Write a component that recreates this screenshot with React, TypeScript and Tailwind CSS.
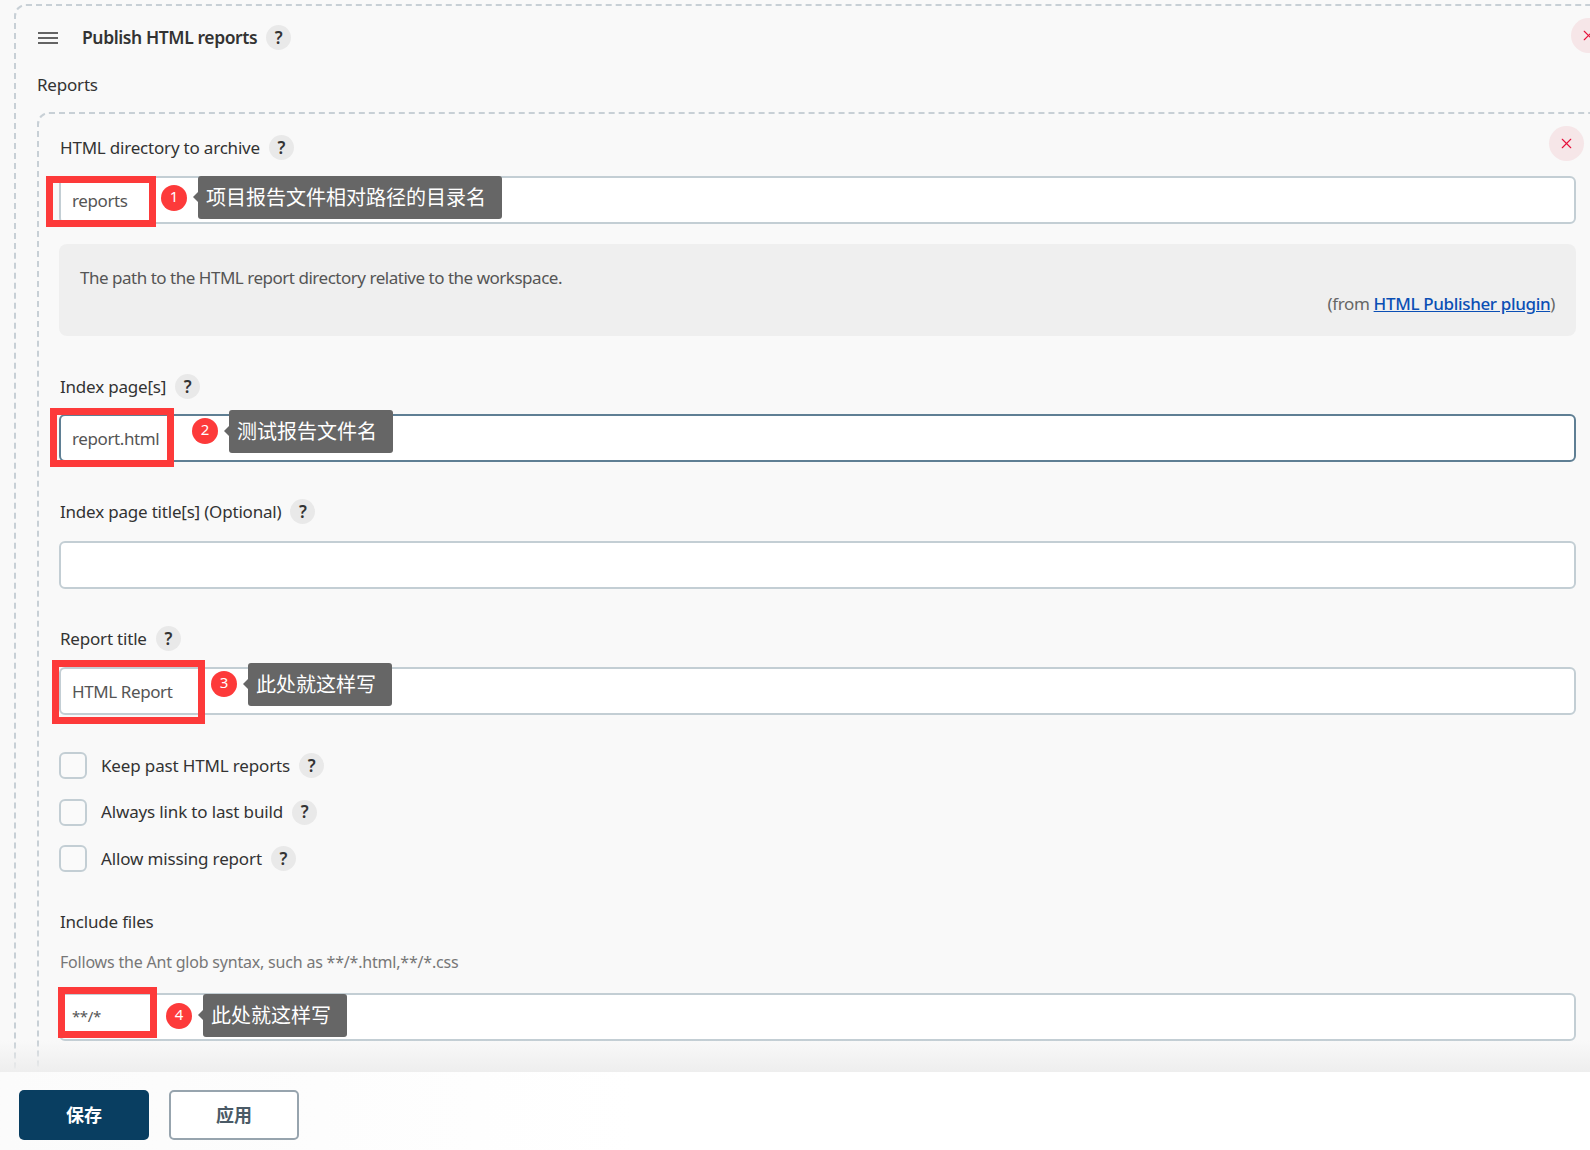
import { X } from "lucide-react";

const font = "font-['Noto_Sans','Noto_Sans_CJK_SC',sans-serif]";

const HelpDot = () => (
  <span className="ml-[9px] flex h-[25px] w-[25px] shrink-0 items-center justify-center rounded-full bg-[#e9e9e9] text-[17px] font-semibold text-[#333]">
    ?
  </span>
);

const Label = ({ text }: { text: string }) => (
  <div className="ml-[1px] flex h-[25px] items-center text-[17px] tracking-[-0.2px] text-[#333]">
    {text}
    <HelpDot />
  </div>
);

const TextBox = ({ value, focused, small }: { value?: string; focused?: boolean; small?: boolean }) => (
  <input
    readOnly
    value={value ?? ""}
    className={`block h-[48px] w-[1517px] rounded-[6px] border-2 bg-white px-[11px] tracking-[-0.4px] text-[#555] outline-none ${
      small ? "pb-[2px] text-[15px]" : "text-[17px]"
    } ${focused ? "border-[#5f7f94]" : "border-[#c3ced4]"}`}
  />
);

const Check = ({ text }: { text: string }) => (
  <div className="flex h-[27px] items-center text-[17px] tracking-[-0.15px] text-[#333]">
    <span className="mr-[14px] h-[27px] w-[28px] rounded-[6px] border-2 border-[#c3ced4] bg-[#fafafa]" />
    {text}
    <HelpDot />
  </div>
);

// red marks the author drew over the screenshot
const Note = ({
  n,
  text,
  box,
  badge,
  tip,
}: {
  n: number;
  text: string;
  box: string;
  badge: string;
  tip: string;
}) => (
  <>
    <div className={`absolute border-[7px] border-[#fd3a3a] ${box}`} />
    <div
      className={`absolute flex h-[26px] w-[26px] items-center justify-center rounded-full bg-[#fd3a3a] pb-[3px] text-[15px] text-white ${badge}`}
    >
      {n}
    </div>
    <div
      className={`absolute flex h-[43px] items-center rounded-[3px] bg-[#666] pl-[8px] text-[20px] text-white ${tip}`}
    >
      <span className="absolute -left-[5px] top-[16px] h-0 w-0 border-y-[5px] border-r-[5px] border-y-transparent border-r-[#666]" />
      {text}
    </div>
  </>
);

export default function App() {
  return (
    <div className={`relative h-[1150px] w-[1590px] overflow-hidden bg-[#f9f9f9] ${font}`}>
      <div className="ml-[14px] mt-[4px] h-[1300px] w-[1700px] rounded-tl-[12px] border-2 border-dashed border-[#c8d0d6] pl-[21px]">
        <div className="mt-[19px] flex h-[25px] items-center text-[#333]">
          <svg width="20" height="12" viewBox="0 0 20 12" className="ml-[1px]">
            <path d="M0 1h20M0 6h20M0 11h20" stroke="#333" strokeWidth="1.6" />
          </svg>
          <span className="ml-[24px] text-[17.5px] font-semibold tracking-[-0.4px]">Publish HTML reports</span>
          <HelpDot />
        </div>
        <div className="mt-[22px] h-[25px] text-[17px] leading-[25px] tracking-[-0.2px] text-[#333]">Reports</div>
        <div className="mt-[15px] h-[1200px] w-[1650px] rounded-tl-[12px] border-2 border-dashed border-[#c8d0d6] pl-[20px] pt-[21px]">
          <Label text="HTML directory to archive" />
          <div className="mt-[16px]">
            <TextBox value="reports" />
          </div>
          <div className="mt-[20px] h-[92px] w-[1517px] rounded-[8px] bg-[#efefef] px-[21px] pt-[21px] text-[17px] tracking-[-0.48px] text-[#555]">
            <div className="leading-[26px]">The path to the HTML report directory relative to the workspace.</div>
            <div className="text-right leading-[26px] tracking-[-0.35px] text-[#666]">
              (from <span className="font-medium text-[#0b4fb5] underline">HTML Publisher plugin</span>)
            </div>
          </div>
          <div className="mt-[38px]">
            <Label text="Index page[s]" />
          </div>
          <div className="mt-[15px]">
            <TextBox value="report.html" focused />
          </div>
          <div className="mt-[37px]">
            <Label text="Index page title[s] (Optional)" />
          </div>
          <div className="mt-[17px]">
            <TextBox />
          </div>
          <div className="mt-[37px]">
            <Label text="Report title" />
          </div>
          <div className="mt-[16px]">
            <TextBox value="HTML Report" />
          </div>
          <div className="mt-[37px] flex flex-col gap-[19.5px]">
            <Check text="Keep past HTML reports" />
            <Check text="Always link to last build" />
            <Check text="Allow missing report" />
          </div>
          <div className="ml-[1px] mt-[37px] h-[25px] text-[17px] leading-[25px] tracking-[-0.2px] text-[#333]">Include files</div>
          <div className="ml-[1px] mt-[16px] h-[25px] text-[16px] leading-[25px] tracking-[-0.2px] text-[#777]">
            Follows the Ant glob syntax, such as **/*.html,**/*.css
          </div>
          <div className="mt-[18px]">
            <TextBox value="**/*" small />
          </div>
        </div>
      </div>

      <button className="absolute left-[1571px] top-[18px] flex h-[35px] w-[35px] items-center justify-center rounded-full bg-[#f6e6e8] text-[#e6103a]">
        <X size={17} strokeWidth={1.6} />
      </button>
      <button className="absolute left-[1549px] top-[126px] flex h-[35px] w-[35px] items-center justify-center rounded-full bg-[#f6e6e8] text-[#e6103a]">
        <X size={17} strokeWidth={1.6} />
      </button>

      <Note
        n={1}
        text="项目报告文件相对路径的目录名"
        box="left-[46px] top-[176px] h-[51px] w-[110px]"
        badge="left-[161px] top-[185px]"
        tip="left-[198px] top-[176px] w-[304px]"
      />
      <Note
        n={2}
        text="测试报告文件名"
        box="left-[50px] top-[408px] h-[59px] w-[124px]"
        badge="left-[192px] top-[418px]"
        tip="left-[229px] top-[410px] w-[164px]"
      />
      <Note
        n={3}
        text="此处就这样写"
        box="left-[52px] top-[660px] h-[64px] w-[153px]"
        badge="left-[211px] top-[671px]"
        tip="left-[248px] top-[663px] w-[144px]"
      />
      <Note
        n={4}
        text="此处就这样写"
        box="left-[58px] top-[987px] h-[51px] w-[99px]"
        badge="left-[166px] top-[1003px]"
        tip="left-[203px] top-[994px] w-[144px]"
      />

      <div className="absolute inset-x-0 top-[1040px] h-[32px] bg-gradient-to-b from-transparent to-[#eeeeee]" />
      <div className="absolute inset-x-0 bottom-0 flex h-[78px] gap-[20px] bg-gradient-to-r from-[#fbfbfb] to-white to-40% pl-[19px] pt-[18px]">
        <button className="h-[50px] w-[130px] rounded-[5px] bg-[#093e61] text-[18px] font-bold text-white">保存</button>
        <button className="h-[50px] w-[130px] rounded-[5px] border-2 border-[#97a4ae] bg-white text-[18px] font-bold text-[#4a5a66]">
          应用
        </button>
      </div>
    </div>
  );
}
